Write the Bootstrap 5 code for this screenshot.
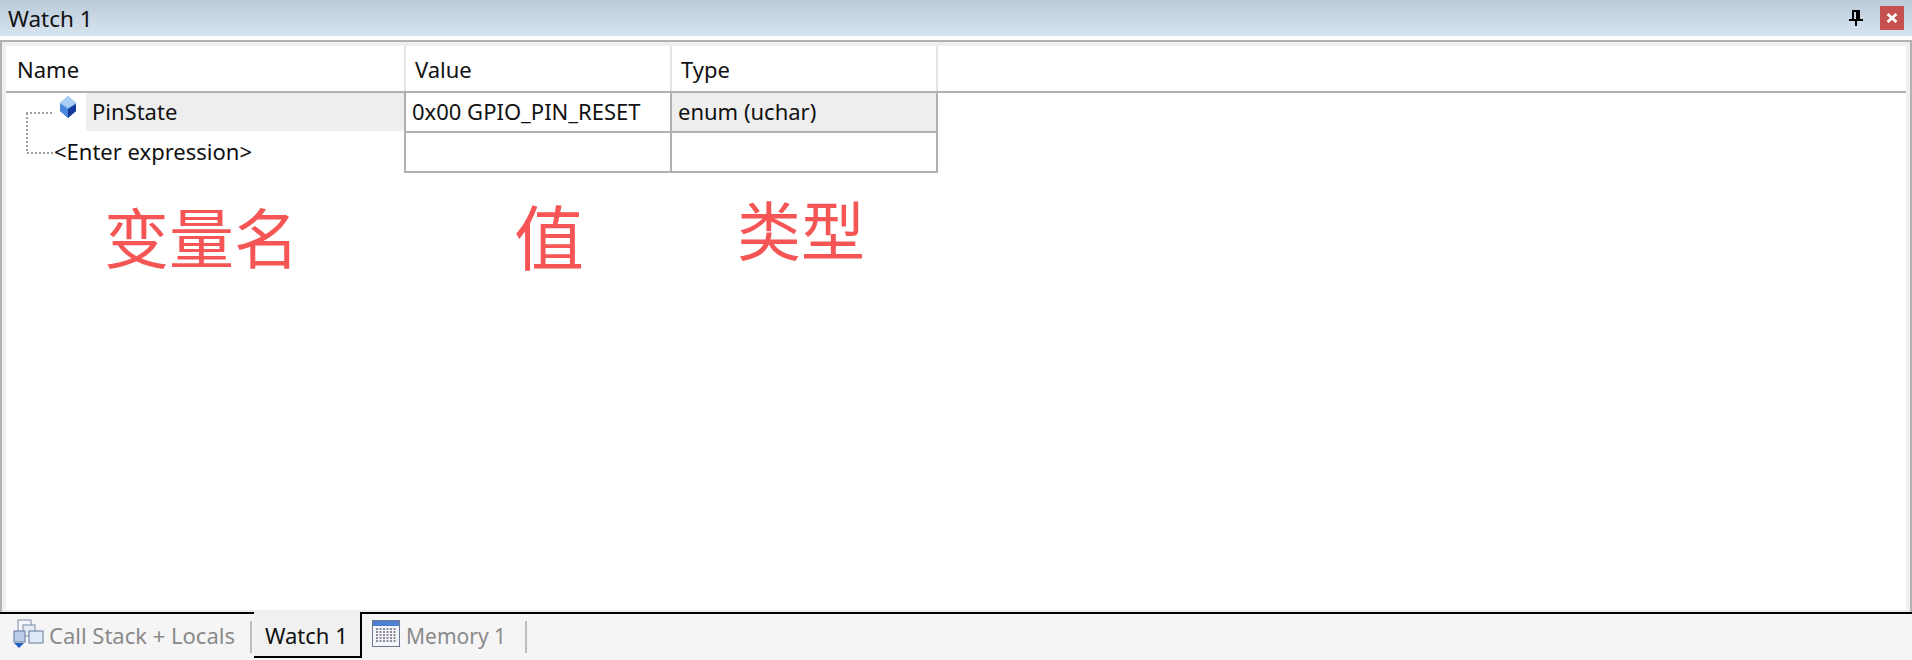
<!DOCTYPE html>
<html lang="zh">
<head>
<meta charset="utf-8">
<title>Watch 1</title>
<link href="https://cdn.jsdelivr.net/npm/bootstrap@5.3.0/dist/css/bootstrap.min.css" rel="stylesheet">
<style>
html,body{height:100%;margin:0;overflow:hidden;background:#fff}
body{font-family:"Noto Sans",sans-serif;font-size:22px;color:#111;line-height:1}
.win{width:1912px;height:660px}
.titlebar{height:36px;flex:none;background:linear-gradient(#bccbda,#d6e4ef);padding:0 8px;font-size:22.5px}
.ttl{padding-top:2px}
.gapwhite{height:4px;flex:none;background:#fff}
.frame{flex:1 1 0;min-height:0;border:solid #b2b2b2;border-width:2px 2px 0 2px;background:#fff;position:relative}
.frame-in{height:100%;border:solid #efefef;border-width:4px 4px 2px 4px;background:#fff}
.hdr{height:47px;border-bottom:2px solid #b0b0b0;flex:none}
.hc{height:100%;padding-left:9px;border-right:2px solid #e4e4e4}
.hc.c1{padding-left:11px}
.c1{width:400px;flex:none}
.c2{width:266px;flex:none}
.c3{width:266px;flex:none}
.rw{flex:none;height:40px}
.n1{width:398px;flex:none;padding-left:80px}
.n1 .sel{background:#eee;height:38px;padding-left:6px;padding-bottom:2px;flex:1}
.n2{padding-left:48px;padding-bottom:5px;height:100%}
.vc{border-left:2px solid #b0b0b0;border-bottom:2px solid #b0b0b0;height:40px;padding-left:6px;padding-bottom:2px;width:266px;flex:none}
.tc{border-left:2px solid #b0b0b0;border-right:2px solid #b0b0b0;border-bottom:2px solid #b0b0b0;height:40px;padding-left:6px;padding-bottom:2px;width:268px;flex:none}
.tc.on{background:#eee}
.tree{position:absolute;left:24px;top:70px}
.gem{position:absolute;left:58px;top:54px}
.notes{font-family:"Noto Sans CJK SC",sans-serif;color:#f55555;font-size:64px;line-height:1}
.nt1{margin-left:98px;margin-top:30px;width:410px;flex:none;font-size:65px}
.nt2{width:223px;flex:none;margin-top:27px;font-size:70px}
.nt3{margin-top:22px}
.tabs{height:48px;flex:none;background:#f5f5f5;border-top:2px solid #000;position:relative}
.tb{height:100%}
.tb1{width:250px;flex:none;color:#8a8a8a;padding-left:49px;padding-bottom:4px}
.tb2{width:108px;height:46px;margin-top:-2px;margin-left:2px;background:#f0f0f0;border-right:2px solid #000;border-bottom:2px solid #000;padding-left:11px;padding-top:2px;flex:none}
.tb3{width:163px;color:#8a8a8a;padding-left:44px;padding-bottom:2px;flex:none;font-size:21px}
.sepv{width:2px;height:32px;background:#bdbdbd;align-self:center;flex:none}
.ic1{position:absolute;left:12px;top:5px}
.ic2{position:absolute;left:372px;top:6px}
.pin{margin-right:17px}
.xbtn{width:24px;height:24px;background:#c75050}
</style>
</head>
<body>
<div class="win d-flex flex-column">
  <div class="titlebar d-flex align-items-center">
    <span class="flex-grow-1 ttl">Watch 1</span>
    <svg class="pin" width="14" height="16" viewBox="0 0 14 16" shape-rendering="crispEdges"><path fill="#000" d="M3 0h8v9h3v2H8v5H6v-5H0V9h3zM5 2v7h2V2z"/></svg>
    <div class="xbtn d-flex align-items-center justify-content-center">
      <svg width="12" height="10" viewBox="0 0 12 10"><path d="M1.5 1l9 8M10.500 1l-9 8" stroke="#fff" stroke-width="2.800" fill="none"/></svg>
    </div>
  </div>
  <div class="gapwhite"></div>
  <div class="frame">
    <div class="frame-in d-flex flex-column">
      <div class="hdr d-flex">
        <div class="hc c1 d-flex align-items-center">Name</div>
        <div class="hc c2 d-flex align-items-center">Value</div>
        <div class="hc c3 d-flex align-items-center">Type</div>
      </div>
      <div class="rw d-flex">
        <div class="n1 d-flex"><div class="sel d-flex align-items-center">PinState</div></div>
        <div class="vc d-flex align-items-center">0x00 GPIO_PIN_RESET</div>
        <div class="tc on d-flex align-items-center">enum (uchar)</div>
      </div>
      <div class="rw d-flex">
        <div class="n1 n2 d-flex align-items-center">&lt;Enter expression&gt;</div>
        <div class="vc"></div>
        <div class="tc"></div>
      </div>
      <div class="notes d-flex">
        <div class="nt1">变量名</div>
        <div class="nt2">值</div>
        <div class="nt3">类型</div>
      </div>
    </div>
    <svg class="tree" width="30" height="44" viewBox="0 0 30 44"><path d="M0 1H26M1 1V41M1 41H28" stroke="#a0a0a0" stroke-width="2" stroke-dasharray="2 2" fill="none"/></svg>
    <svg class="gem" width="16" height="22" viewBox="0 0 16 22"><path fill="#6aa3e8" d="M8 0l8 7v8l-8 7-8-7V7z"/><path fill="#a9cdf5" d="M8 0l8 7-8 5-8-5z"/><path fill="#12399a" d="M16 8v7l-8 7v-9z"/><path fill="#4a86dc" d="M0 8l8 5v9l-8-7z"/></svg>
  </div>
  <div class="tabs d-flex">
    <svg class="ic1" width="32" height="30" viewBox="0 0 32 30"><rect x="6" y="1" width="13" height="12" fill="#f3f6fb" stroke="#7d8aa0"/><rect x="11" y="6" width="12" height="11" fill="#e6ecf6" stroke="#7d8aa0"/><rect x="17" y="12" width="14" height="12" fill="#dfe9f7" stroke="#5f7898"/><rect x="2" y="12" width="11" height="11" fill="#b9cdea" stroke="#5f7898"/><path fill="#1f5fc4" d="M2 24h10l-5 5z"/></svg>
    <div class="tb tb1 d-flex align-items-center">Call Stack + Locals</div>
    <div class="sepv"></div>
    <div class="tb2 d-flex align-items-center">Watch 1</div>
    <svg class="ic2" width="28" height="27" viewBox="0 0 28 27"><rect x=".5" y=".5" width="27" height="26" fill="#f4f6fa" stroke="#6a7a96"/><rect x="1" y="1" width="26" height="5" fill="#4f7fd0"/><path d="M4 9h20M4 12h20M4 15h20M4 18h20M4 21h20" stroke="#6a6a7a" stroke-width="1.500" stroke-dasharray="2 1.500"/></svg>
    <div class="tb tb3 d-flex align-items-center">Memory 1</div>
    <div class="sepv"></div>
  </div>
</div>
</body>
</html>
